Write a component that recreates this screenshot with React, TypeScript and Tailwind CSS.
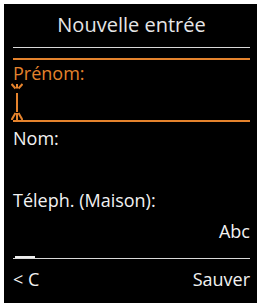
export default function App() {
  const font = { fontFamily: '"Open Sans", "Noto Sans", sans-serif' };
  return (
    <div className="w-[259px] h-[303px] bg-white pl-[4px] pt-[4px]" style={font}>
      <div className="w-[253px] h-[299px] bg-black flex flex-col pl-[9px] pr-[7px] pt-[9px] text-[18px] text-[#f2f2f2]">
        {/* titre */}
        <div className="h-[24px] leading-[24px] text-center text-[20px] text-[#e6e6e6]">Nouvelle entrée</div>
        <div className="mt-[10px] h-px bg-[#d9d9d9]" />
        <div className="mt-[10px] h-[2px] bg-[#e5832d]" />

        {/* champ actif */}
        <div className="mt-[3px] h-[20px] leading-[20px] text-[#e5832d]">Prénom:</div>
        <svg width="12" height="37" viewBox="0 0 12 37" className="ml-[-2px]">
          <g stroke="#e5832d" strokeWidth="2" fill="none">
            <path d="M0.5 1 L4.5 5.5" />
            <path d="M11.5 1 L7.5 5.5" />
            <path d="M6 1 L6 5.5" />
            <path d="M6 10 L6 29" />
            <path d="M4.5 30 L0.5 37" />
            <path d="M7.5 30 L11.5 37" />
            <path d="M6 30 L6 37" />
          </g>
        </svg>
        <div className="h-[2px] bg-[#e5832d]" />

        <div className="mt-[4px] h-[24px] leading-[24px]">Nom:</div>
        <div className="mt-[38px] h-[24px] leading-[24px]">Téleph. (Maison):</div>
        <div className="mt-[7px] h-[24px] leading-[24px] text-right">Abc</div>

        {/* barre du bas */}
        <div className="mt-[13px] ml-[2px] w-[20px] h-[2px] bg-[#ededed]" />
        <div className="h-px bg-[#d9d9d9]" />
        <div className="mt-[8px] h-[24px] leading-[24px] flex justify-between">
          <span>&lt; C</span>
          <span>Sauver</span>
        </div>
      </div>
    </div>
  );
}
